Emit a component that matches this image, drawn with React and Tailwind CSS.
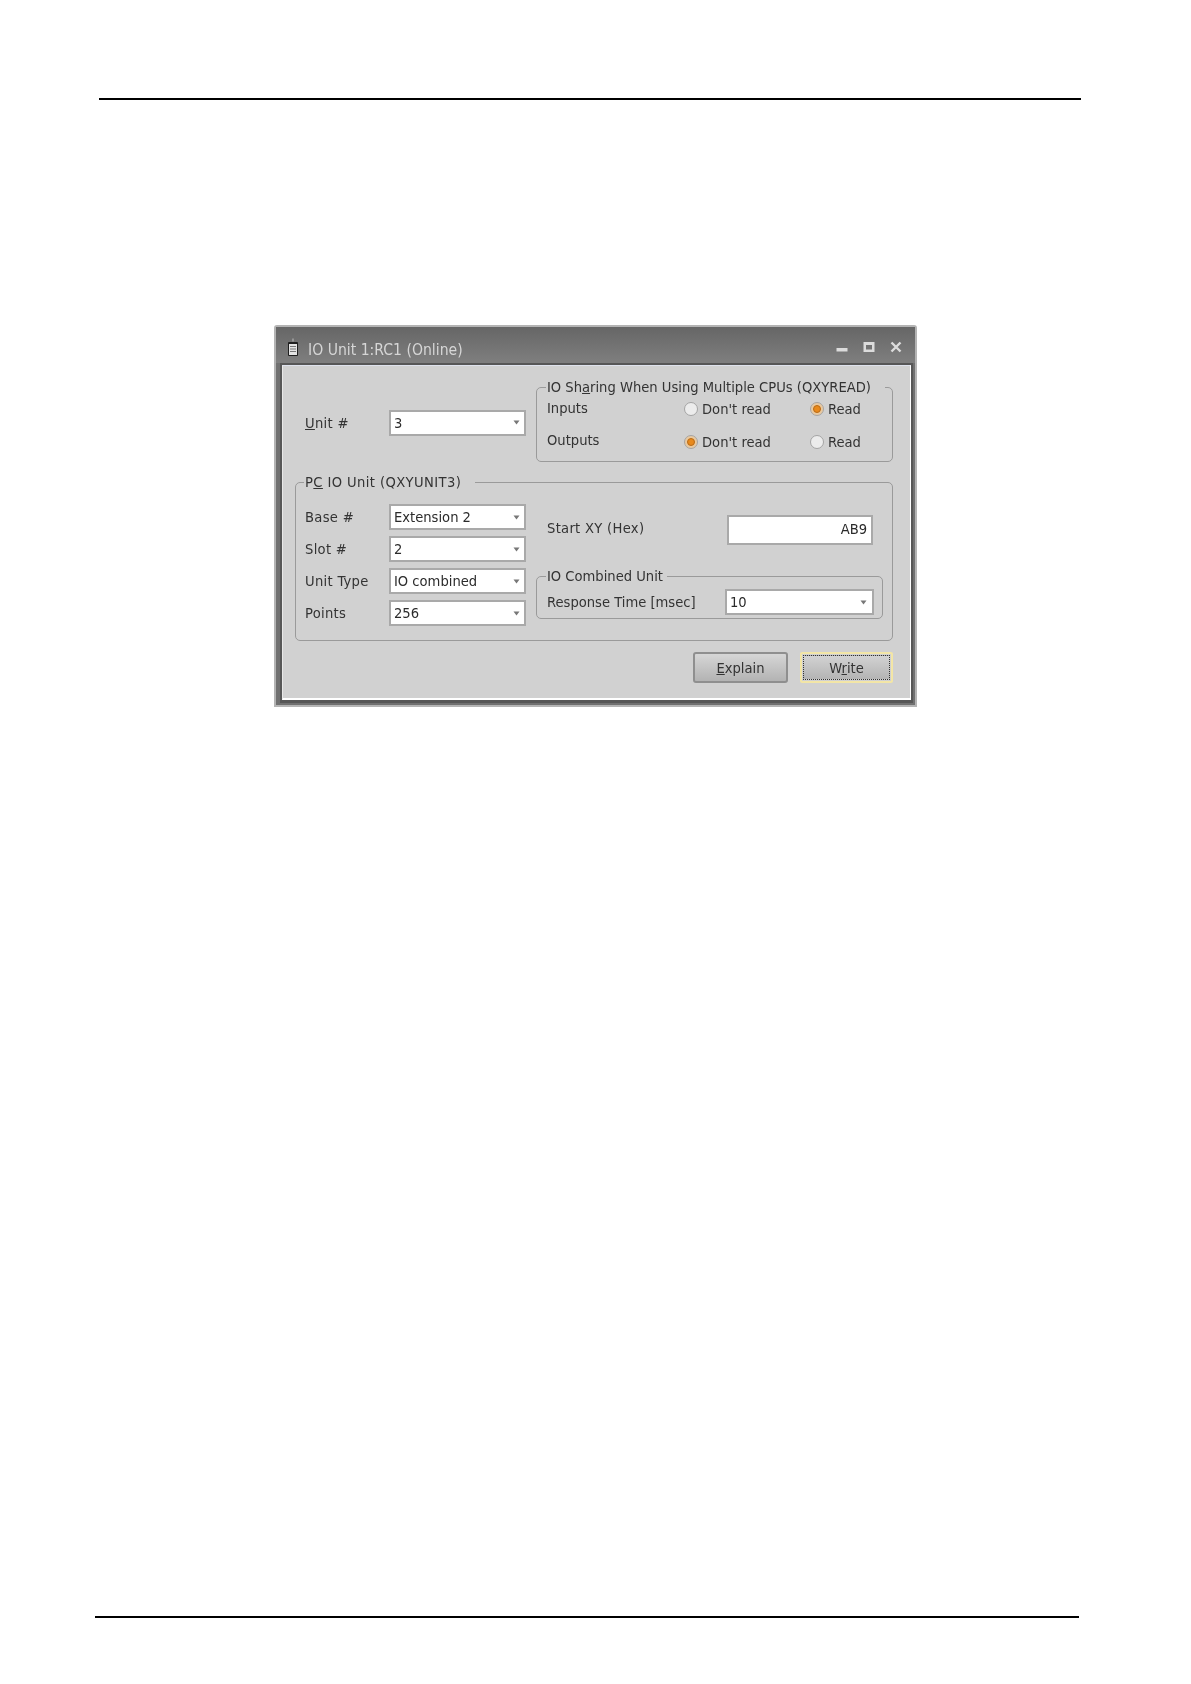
const font = { fontFamily: '"DejaVu Sans", "Liberation Sans", sans-serif' };

function Arrow() {
  return (
    <svg width="7" height="5" viewBox="0 0 7 5" className="shrink-0">
      <path d="M0.5 0.5H6.5L3.5 4.5Z" fill="#777" />
    </svg>
  );
}

function Combo({ value, className = "w-[137px] pr-[4px]" }) {
  return (
    <div className={`h-[26px] ${className} shrink-0 bg-white border-2 border-[#a9a9a9] flex items-center justify-between pl-[3px] text-[#2b2b2b]`}>
      <span>{value}</span>
      <Arrow />
    </div>
  );
}

function Radio({ on }) {
  return (
    <span className={`w-[14px] h-[14px] rounded-full shrink-0 flex items-center justify-center border border-[#a4a4a4] ${on ? "bg-[#e9c9a0]" : "bg-[#ececec]"}`}>
      {on && <span className="w-[8px] h-[8px] rounded-full bg-[#e8891c] border border-[#b96a14]" />}
    </span>
  );
}

function Opt({ on, label }) {
  return (
    <div className="flex items-center gap-[4px]">
      <Radio on={on} />
      <span>{label}</span>
    </div>
  );
}

function Row({ label, value }) {
  return (
    <div className="flex items-center">
      <span className="w-[84px] shrink-0 tracking-[0.3px]">{label}</span>
      <Combo value={value} />
    </div>
  );
}

export default function App() {
  return (
    <div className="w-[1191px] h-[1684px] bg-white overflow-hidden pt-[98px]">
      <div className="h-[2px] w-[982px] ml-[99px] bg-black" />
      <div
        className="mt-[225px] ml-[274px] w-[643px] h-[382px] border-2 border-[#b4b4b4] rounded-t-[3px] bg-[#707070] flex flex-col font-stretch-condensed text-[14.6px] leading-[18px] text-[#333] blur-[0.4px]"
        style={font}
      >
        <div className="h-[36px] shrink-0 flex items-center pl-[12px] pr-[13px] pt-[12px] pb-[2px] bg-gradient-to-b from-[#666666] to-[#7f7f7f] text-[#d6d6d6]">
          <svg width="10" height="18" viewBox="0 0 10 18" className="shrink-0 -mt-[6px]">
            <path d="M4.5 0.5h1v3h-1z" fill="#bbb" />
            <rect x="0" y="4" width="10" height="14" rx="1" fill="#1f1f1f" />
            <rect x="1" y="6" width="8" height="11" fill="#e4e4e4" />
            <path d="M2 8.5h6M2 11h6M2 13.5h6" stroke="#777" strokeWidth="1" />
          </svg>
          <span className="ml-[10px] flex-1 text-[15.6px]">IO Unit 1:RC1 (Online)</span>
          <div className="flex items-center gap-[15px] -mt-[7px]">
            <svg width="12" height="12" viewBox="0 0 12 12"><rect x="0.5" y="7" width="11" height="3.5" fill="#dcdcdc" /></svg>
            <svg width="12" height="12" viewBox="0 0 12 12"><path d="M0.5 1h11v10h-11zM3 4v4.5h6V4z" fill="#dcdcdc" fillRule="evenodd" /></svg>
            <svg width="12" height="12" viewBox="0 0 12 12"><path d="M1.5 1.5L10.5 10.5M10.5 1.5L1.5 10.5" stroke="#dcdcdc" strokeWidth="2.4" /></svg>
          </div>
        </div>

        <div className="ml-[4px] mr-[2px] h-[340px] shrink-0 border-2 border-[#575757] border-b-[3px]">
          <div className="h-full bg-[#d1d1d1] border-t border-t-[#dfe3ee] border-b-2 border-b-white border-r border-r-white border-l border-l-[#e8e8e8] pl-[12px] pr-[17px] pt-[12px] flex flex-col">
            <div className="flex h-[84px] shrink-0">
              <div className="w-[241px] shrink-0 flex items-center pl-[10px] pt-[5px]">
                <span className="w-[84px] shrink-0 tracking-[0.3px]"><u>U</u>nit #</span>
                <Combo value="3" />
              </div>
              <fieldset className="flex-1 border border-[#9a9a9a] rounded-[5px] pl-[10px]">
                <legend className="pl-[1px] -ml-[1px] pr-[14px] whitespace-nowrap">IO Sh<u>a</u>ring When Using Multiple CPUs (QXYREAD)</legend>
                <div className="grid grid-cols-[137px_126px_1fr] grid-rows-[26px_26px] gap-y-[7px] items-center">
                  <span className="mb-[3px]">Inputs</span>
                  <Opt label="Don't read" />
                  <Opt on label="Read" />
                  <span className="mb-[4px]">Outputs</span>
                  <Opt on label="Don't read" />
                  <Opt label="Read" />
                </div>
              </fieldset>
            </div>

            <fieldset className="mt-[11px] h-[168px] shrink-0 border border-[#9a9a9a] rounded-[5px] pl-[9px] pr-[9px] pt-[13px]">
              <legend className="pl-[1px] -ml-[1px] pr-[14px] tracking-[0.4px] whitespace-nowrap">P<u>C</u> IO Unit (QXYUNIT3)</legend>
              <div className="flex">
                <div className="w-[231px] shrink-0 flex flex-col gap-[6px]">
                  <Row label="Base #" value="Extension 2" />
                  <Row label="Slot #" value="2" />
                  <Row label="Unit Type" value="IO combined" />
                  <Row label="Points" value="256" />
                </div>
                <div className="flex-1 flex flex-col pt-[11px]">
                  <div className="flex items-center justify-between pl-[11px] pr-[10px]">
                    <span className="mb-[4px] tracking-[0.3px]">Start XY (Hex)</span>
                    <div className="w-[146px] h-[30px] bg-white border-2 border-[#a9a9a9] flex items-center justify-end pr-[4px] pb-[3px] text-[#2b2b2b]">AB9</div>
                  </div>
                  <fieldset className="mt-[22px] h-[52px] border border-[#9a9a9a] rounded-[5px] pl-[10px] pr-[8px]">
                    <legend className="pl-[1px] -ml-[1px] pr-[4px] whitespace-nowrap">IO Combined Unit</legend>
                    <div className="flex items-center justify-between pt-[4px]">
                      <span>Response Time [msec]</span>
                      <Combo value="10" className="w-[149px] pr-[5px]" />
                    </div>
                  </fieldset>
                </div>
              </div>
            </fieldset>

            <div className="mt-[11px] flex justify-end gap-[12px]">
              <button className="w-[95px] h-[31px] rounded-[3px] border-2 border-[#8f8f8f] bg-gradient-to-b from-[#d6d6d6] to-[#b3b3b3] text-[#333]"><u>E</u>xplain</button>
              <div className="w-[93px] h-[31px] rounded-[2px] border-2 border-[#f3e6a6] p-px">
                <button className="w-full h-full border border-dotted border-[#333] bg-gradient-to-b from-[#d2d2d2] to-[#b4b4b4] text-[#333]">W<u>r</u>ite</button>
              </div>
            </div>
          </div>
        </div>
      </div>
      <div className="h-[2px] w-[984px] ml-[95px] mt-[909px] bg-black" />
    </div>
  );
}
